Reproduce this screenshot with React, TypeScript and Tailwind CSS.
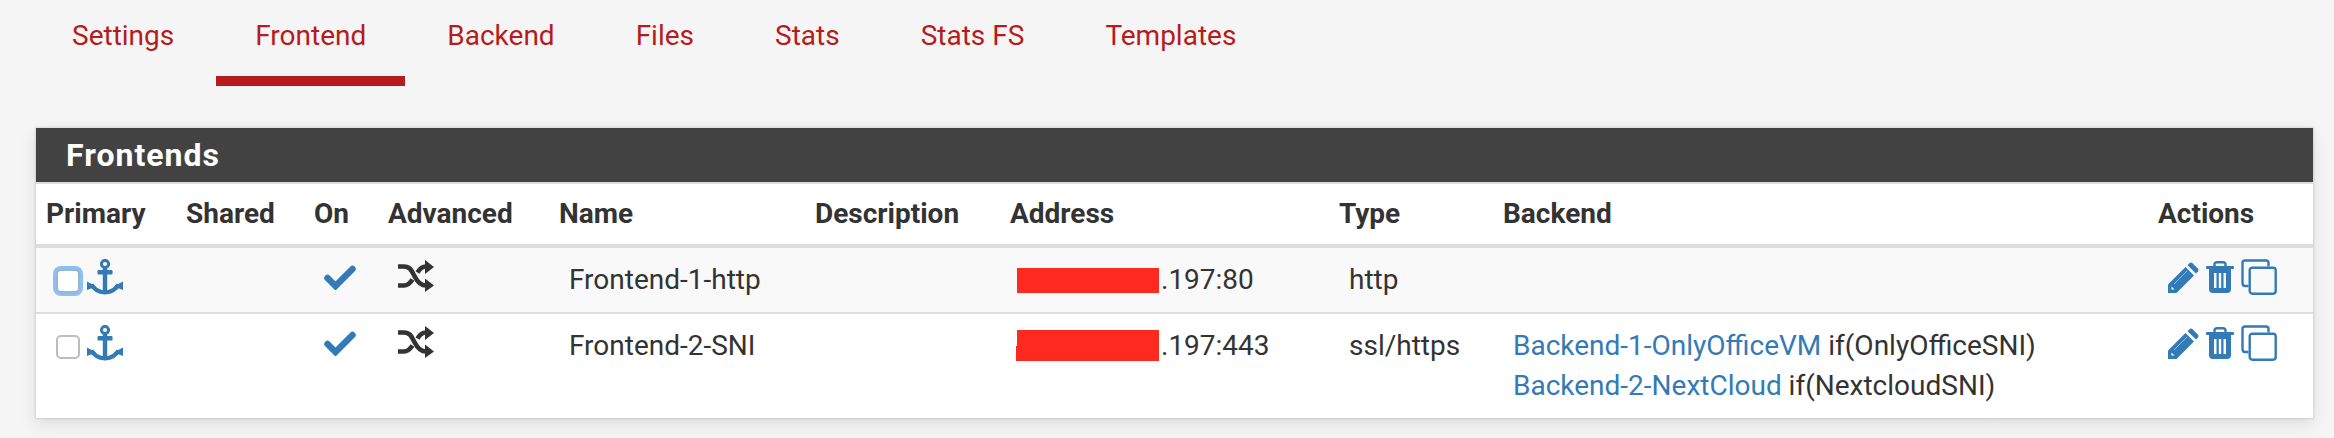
const tabs = ['Settings', 'Frontend', 'Backend', 'Files', 'Stats', 'Stats FS', 'Templates'];

const headers = ['Primary', 'Shared', 'On', 'Advanced', 'Name', 'Description', 'Address', 'Type', 'Backend', 'Actions'];

function AnchorIcon() {
  return (
    <svg viewBox="0 0 36 36" className="w-[36px] h-[36px] text-[#337ab7]" fill="currentColor">
      <circle cx="18" cy="5" r="3.6" fill="none" stroke="currentColor" strokeWidth="3" />
      <rect x="10.5" y="11" width="15" height="4.6" rx="1.2" />
      <rect x="15.8" y="8" width="4.4" height="26" />
      <path d="M4.5 25.5C7 30.5 12.5 33 18 33.5C23.5 33 29 30.5 31.5 25.5" fill="none" stroke="currentColor" strokeWidth="4" />
      <path d="M0 22.5V31L9.5 27.5Z" />
      <path d="M36 22.5V31L26.5 27.5Z" />
    </svg>
  );
}

function CheckIcon() {
  return (
    <svg viewBox="0 0 32 25" className="w-[32px] h-[25px] text-[#337ab7]" fill="none">
      <path d="M3.5 13L11.5 21L28.5 4" stroke="currentColor" strokeWidth="6.5" strokeLinecap="round" strokeLinejoin="miter" />
    </svg>
  );
}

function ShuffleIcon() {
  return (
    <svg viewBox="0 0 36 32" className="w-[36px] h-[32px] text-[#333]" fill="none">
      <path d="M0 6.5H6C13 6.5 14 12 17 17C20 23 23 25.5 28 25.5" stroke="currentColor" strokeWidth="4.6" />
      <path d="M0 25.5H6C10 25.5 12.5 22.5 14.5 19.5" stroke="currentColor" strokeWidth="4.6" />
      <path d="M19.5 12.5C21.5 9 24 6.5 28 6.5" stroke="currentColor" strokeWidth="4.6" />
      <path d="M27 0L36 7L27 14Z" fill="currentColor" />
      <path d="M27 18.5L36 25.5L27 32Z" fill="currentColor" />
    </svg>
  );
}

function PencilIcon() {
  return (
    <svg viewBox="0 0 31 31" className="w-[31px] h-[31px] text-[#337ab7]" fill="currentColor">
      <path d="M0 31V22.5L17.5 5L26 13.5L8.5 31Z" />
      <path d="M19.5 3.2L21.5 1.2Q23 0 24.5 1.2L30 6.7Q31 8 30 9.5L28 11.6Z" />
      <path d="M3.5 27.5V24.5L6.5 27.5Z" fill="#fff" />
      <path d="M6 22L19 9" stroke="#fff" strokeWidth="1" opacity="0.5" />
    </svg>
  );
}

function TrashIcon() {
  return (
    <svg viewBox="0 0 28 32" className="w-[28px] h-[32px] text-[#337ab7]" fill="currentColor">
      <path d="M8.5 6V3.5Q8.5 1.2 11 1.2H17Q19.5 1.2 19.5 3.5V6" fill="none" stroke="currentColor" strokeWidth="2.4" />
      <rect x="0" y="5" width="28" height="3" rx="1" />
      <path fillRule="evenodd" d="M3 8H25V28Q25 32 21 32H7Q3 32 3 28ZM8 12V27H10.5V12ZM12.8 12V27H15.2V12ZM17.5 12V27H20V12Z" />
    </svg>
  );
}

function CloneIcon() {
  return (
    <svg viewBox="0 0 36 36" className="w-[36px] h-[36px] text-[#337ab7]" fill="none" stroke="currentColor" strokeWidth="2.4">
      <path d="M27.5 7.5V4Q27.5 1.5 25 1.5H4Q1.5 1.5 1.5 4V24Q1.5 27 4 27H7.5" />
      <rect x="8.7" y="8.7" width="26" height="26" rx="2.6" />
    </svg>
  );
}

function Actions() {
  return (
    <div className="flex items-start">
      <span className="mt-[2px]"><PencilIcon /></span>
      <span className="mt-[1px] ml-[7px]"><TrashIcon /></span>
      <span className="-mt-[1px] ml-[7px]"><CloneIcon /></span>
    </div>
  );
}

function Primary({ focused }: { focused?: boolean }) {
  return (
    <div className="flex items-start gap-[7px]">
      <input
        type="checkbox"
        readOnly
        className={`appearance-none shrink-0 w-[24px] h-[24px] mt-[9px] rounded-[5px] border-2 bg-white ${
          focused ? 'border-[#9ab6cf] shadow-[0_0_0_3px_#8cc0f5]' : 'border-[#bdbdbd]'
        }`}
      />
      <span className="-mt-[1px]"><AnchorIcon /></span>
    </div>
  );
}

export default function App() {
  return (
    <div className="h-[438px] overflow-hidden bg-[#f5f5f5] font-['Roboto',sans-serif] text-[28px] leading-[40px] text-[#333]">
      {/* Tabs */}
      <nav className="flex gap-[3px] pl-[33px]">
        {tabs.map((tab) => (
          <a
            key={tab}
            className={`px-[39px] pt-[16px] pb-[20px] border-b-[10px] text-[#b71c1c] ${
              tab === 'Frontend' ? 'border-[#b71c1c]' : 'border-transparent'
            }`}
          >
            {tab}
          </a>
        ))}
      </nav>

      {/* Panel */}
      <div className="mt-[42px] ml-[36px] mr-[21px] bg-white shadow-[0_0_2px_1px_rgba(0,0,0,0.1),0_6px_16px_rgba(0,0,0,0.1)]">
        <h2 className="h-[54px] pl-[30px] bg-[#424242] text-white text-[32px] leading-[54px] font-bold tracking-[1px]">
          Frontends
        </h2>
        <div className="h-[2px] bg-[#ddd]" />
        <table className="w-full table-fixed border-collapse">
          <colgroup>
            <col className="w-[140px]" />
            <col className="w-[128px]" />
            <col className="w-[74px]" />
            <col className="w-[171px]" />
            <col className="w-[256px]" />
            <col className="w-[195px]" />
            <col className="w-[329px]" />
            <col className="w-[164px]" />
            <col className="w-[655px]" />
            <col className="w-[165px]" />
          </colgroup>
          <thead>
            <tr className="border-b-4 border-[#ddd]">
              {headers.map((h) => (
                <th key={h} className="px-[10px] py-[10px] text-left font-bold">
                  {h}
                </th>
              ))}
            </tr>
          </thead>
          <tbody>
            <tr className="bg-[#f9f9f9] border-b-2 border-[#ddd] [&>td]:px-[20px] [&>td]:py-[12px] [&>td]:align-top">
              <td><Primary focused /></td>
              <td></td>
              <td><div className="mt-[5px]"><CheckIcon /></div></td>
              <td><ShuffleIcon /></td>
              <td>Frontend-1-http</td>
              <td></td>
              <td>
                <div className="flex -ml-[3px]">
                  <span className="w-[142px] h-[25px] mt-[8px] mr-[2px] bg-[#ff2a1f]" />
                  <span>.197:80</span>
                </div>
              </td>
              <td>http</td>
              <td></td>
              <td><Actions /></td>
            </tr>
            <tr className="[&>td]:px-[20px] [&>td]:py-[12px] [&>td]:align-top">
              <td><Primary /></td>
              <td></td>
              <td><div className="mt-[5px]"><CheckIcon /></div></td>
              <td><ShuffleIcon /></td>
              <td>Frontend-2-SNI</td>
              <td></td>
              <td>
                <div className="flex -ml-[3px]">
                  <div className="flex flex-col w-[142px] mt-[4px] mr-[2px]">
                    <span className="h-[16px] bg-[#ff2a1f]" />
                    <span className="h-[15px] -ml-[1px] bg-[#ff2a1f]" />
                  </div>
                  <span>.197:443</span>
                </div>
              </td>
              <td>ssl/https</td>
              <td className="whitespace-nowrap">
                <div><a className="text-[#337ab7]">Backend-1-OnlyOfficeVM</a> if(OnlyOfficeSNI)</div>
                <div><a className="text-[#337ab7]">Backend-2-NextCloud</a> if(NextcloudSNI)</div>
              </td>
              <td><Actions /></td>
            </tr>
          </tbody>
        </table>
      </div>
    </div>
  );
}
